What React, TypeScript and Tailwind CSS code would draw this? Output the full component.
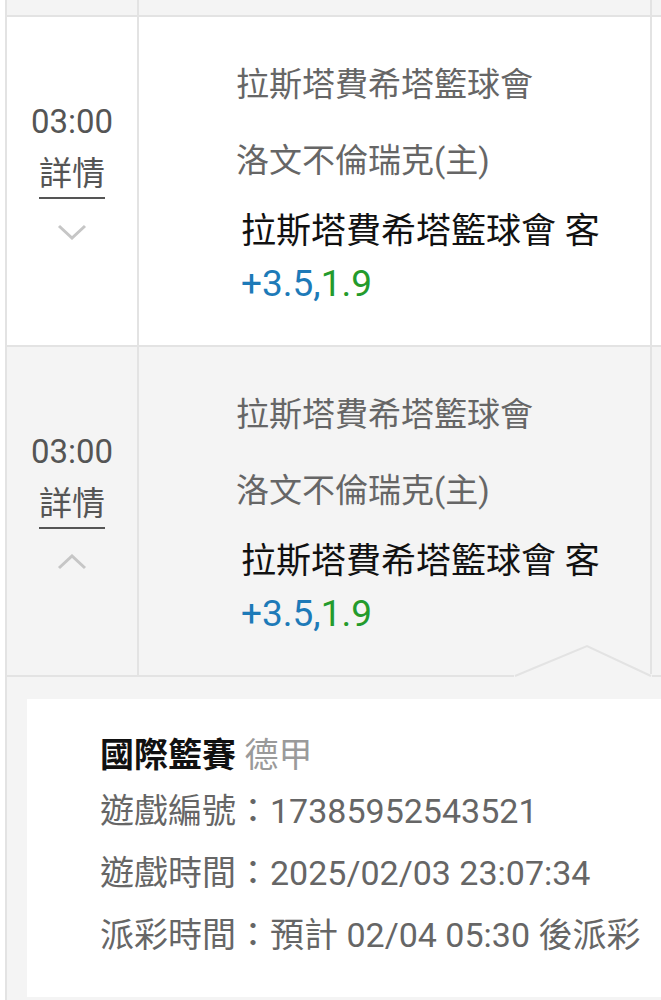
import React from "react";

const FONT = "font-['Roboto','Noto_Sans_CJK_TC',sans-serif]";

function Chevron({ up }: { up?: boolean }) {
  return (
    <svg width="30" height="16" viewBox="0 0 30 16" className="mt-[24px]">
      <polyline
        points={up ? "2,14 15,2 28,14" : "2,2 15,14 28,2"}
        fill="none"
        stroke="#c6c6c6"
        strokeWidth="3"
      />
    </svg>
  );
}

function Row({ up, gray }: { up?: boolean; gray?: boolean }) {
  return (
    <div
      className={`flex h-[330px] border-b-2 border-[#e3e3e3] ${gray ? "bg-[#f4f4f4]" : "bg-white"}`}
    >
      <div className="flex w-[132px] flex-col items-center border-r-2 border-[#e3e3e3] pt-[79px]">
        <div className="text-[33px] leading-[52px] text-[#555]">03:00</div>
        <div className="text-[33px] leading-[52px] text-[#555] underline decoration-2 underline-offset-[12px]">
          詳情
        </div>
        <Chevron up={up} />
      </div>
      <div className="w-[513px] border-r-2 border-[#e3e3e3] pl-[97px] pt-[30px]">
        <div className="text-[33px] leading-[76px] text-[#666]">拉斯塔費希塔籃球會</div>
        <div className="text-[33px] leading-[76px] text-[#666]">洛文不倫瑞克(主)</div>
        <div className="pl-[5px]">
          <div className="text-[35px] leading-[66px] text-[#111]">拉斯塔費希塔籃球會 客</div>
          <div className="text-[37px] leading-[37px]">
            <span className="text-[#1d7ab8]">+3.5,</span>
            <span className="text-[#249b2c]">1.9</span>
          </div>
        </div>
      </div>
      <div className="flex-1" />
    </div>
  );
}

export default function App() {
  return (
    <div className={`w-[661px] h-[1000px] overflow-hidden bg-white pl-[5px] ${FONT}`}>
      <div className="border-l-2 border-[#e3e3e3]">
        <div className="flex h-[17px] border-b-2 border-[#e3e3e3] bg-[#f4f4f4]">
          <div className="w-[132px] border-r-2 border-[#e3e3e3]" />
          <div className="w-[513px] border-r-2 border-[#e3e3e3]" />
          <div className="flex-1" />
        </div>
        <Row />
        <Row up gray />
        <div className="relative bg-[#f4f4f4] pl-[20px] pt-[22px] pb-[3px]">
          <svg
            width="145"
            height="36"
            viewBox="0 0 145 36"
            className="absolute left-[503px] top-[-34px]"
          >
            <rect x="4" y="31" width="138" height="5" fill="#f4f4f4" />
            <polyline
              points="5,33 77,3 141,33"
              fill="none"
              stroke="#e3e3e3"
              strokeWidth="2"
            />
          </svg>
          <div className="bg-white pl-[73px] pt-[31px] pb-[31px]">
            <div className="text-[34px] leading-[50px]">
              <span className="font-bold text-[#111]">國際籃賽</span>{" "}
              <span className="text-[#9a9a9a]">德甲</span>
            </div>
            <div className="text-[34px] leading-[62px] text-[#666]">遊戲編號：17385952543521</div>
            <div className="text-[34px] leading-[62px] text-[#666]">遊戲時間：2025/02/03 23:07:34</div>
            <div className="text-[34px] leading-[62px] text-[#666] whitespace-nowrap">
              派彩時間：預計 02/04 05:30 後派彩
            </div>
          </div>
        </div>
      </div>
    </div>
  );
}
